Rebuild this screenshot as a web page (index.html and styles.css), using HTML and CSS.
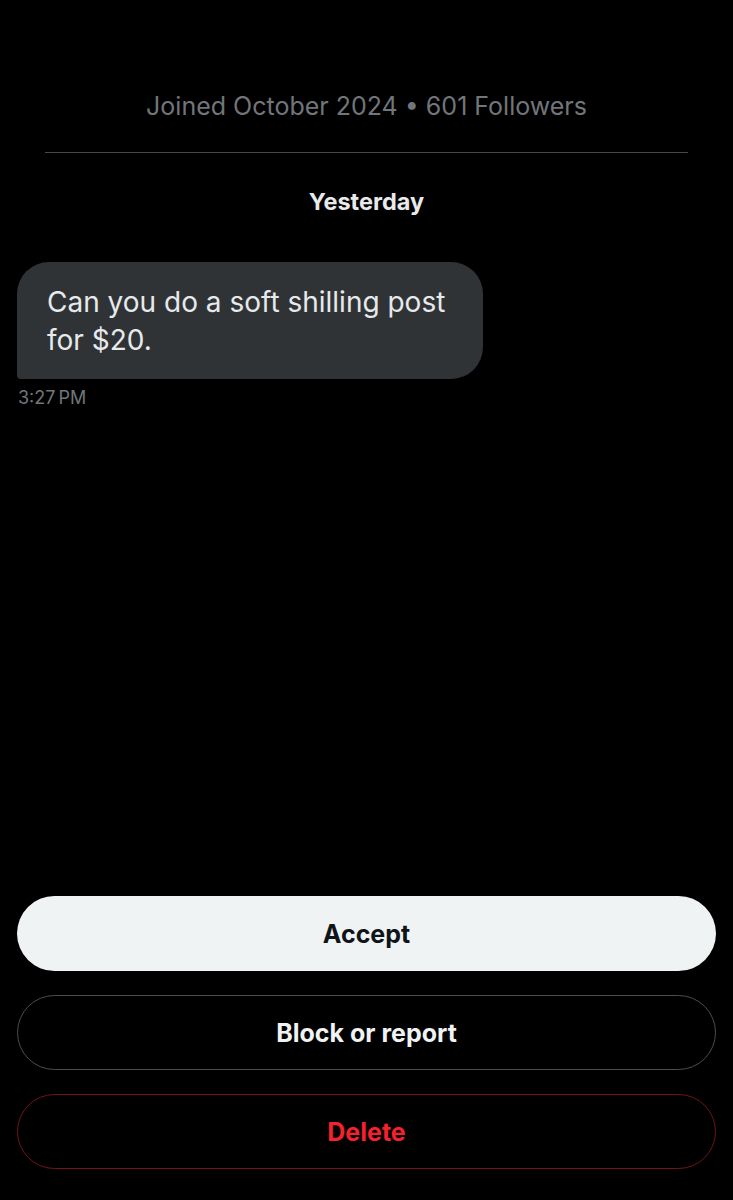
FILE: index.html
```html
<!DOCTYPE html>
<html lang="en">
<head>
    <meta charset="UTF-8">
    <meta name="viewport" content="width=device-width, initial-scale=1.0">
    <title>Message request</title>
    <link rel="stylesheet" href="styles.css">
</head>
<body>
    <div class="screen">
        <div class="profile-info">Joined October 2024 &bull; 601 Followers</div>
        <div class="divider"></div>

        <div class="day-label">Yesterday</div>

        <div class="message">
            <div class="bubble">Can you do a soft shilling post for $20.</div>
            <div class="timestamp">3:27 PM</div>
        </div>

        <div class="spacer"></div>

        <div class="actions">
            <button type="button" class="btn btn-accept">Accept</button>
            <button type="button" class="btn btn-outline">Block or report</button>
            <button type="button" class="btn btn-danger">Delete</button>
        </div>
    </div>
</body>
</html>
```

FILE: styles.css
```css
body {
    margin: 0;
    background-color: #000;
    font-family: Inter, Roboto, "Liberation Sans", Arial, sans-serif;
    color: #e7e9ea;
}
.screen {
    min-height: 1200px;
    display: flex;
    flex-direction: column;
    padding: 0 17px;
    box-sizing: border-box;
}
.profile-info {
    margin-top: 91px;
    text-align: center;
    font-size: 25px;
    line-height: 30px;
    color: #71767b;
}
.divider {
    margin: 31px 28px 0;
    height: 1px;
    background-color: #45484c;
}
.day-label {
    margin-top: 35px;
    text-align: center;
    font-size: 23.5px;
    line-height: 28px;
    font-weight: bold;
    color: #e7e9ea;
}
.message {
    margin-top: 46px;
}
.bubble {
    width: 466px;
    box-sizing: border-box;
    padding: 21px 30px 20px;
    background-color: #2f3336;
    border-radius: 32px 32px 32px 4px;
    font-size: 28px;
    line-height: 38px;
    color: #e7e9ea;
}
.timestamp {
    margin-top: 8px;
    margin-left: 1px;
    font-size: 18px;
    line-height: 22px;
    word-spacing: -2px;
    color: #71767b;
}
.spacer {
    flex: 1;
}
.actions {
    display: flex;
    flex-direction: column;
    gap: 24px;
    padding-bottom: 31px;
}
.btn {
    height: 75px;
    width: 100%;
    border-radius: 38px;
    font-family: inherit;
    font-size: 25px;
    font-weight: bold;
    cursor: pointer;
    box-sizing: border-box;
}
.btn-accept {
    background-color: #eff3f4;
    color: #0f1419;
    border: none;
}
.btn-outline {
    background-color: #000;
    color: #eff3f4;
    border: 1.5px solid #4a4d51;
}
.btn-danger {
    background-color: #000;
    color: #f4212e;
    border: 1.5px solid #75121b;
}
```
